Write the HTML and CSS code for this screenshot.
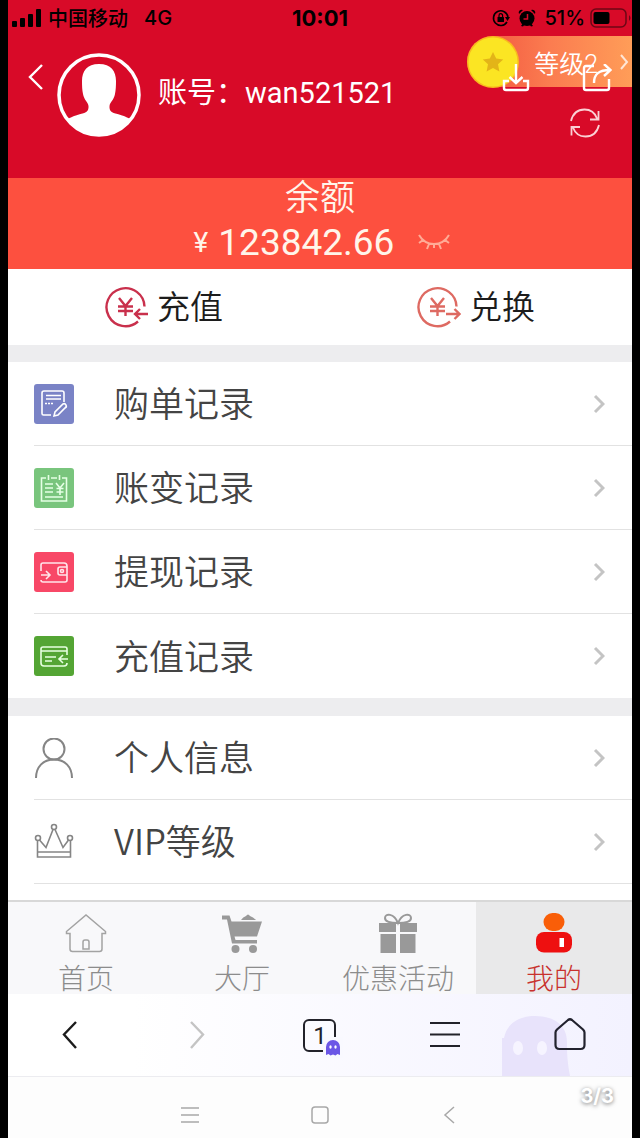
FILE: index.html
```html
<!DOCTYPE html>
<html lang="zh-CN">
<head>
    <meta charset="UTF-8">
    <meta name="viewport" content="width=device-width, initial-scale=1.0">
    <title>我的</title>
    <link rel="stylesheet" href="styles.css">
</head>
<body>
    <header class="header">
        <div class="status-bar">
            <div class="status-left">
                <svg width="30" height="18" viewBox="0 0 30 18"><rect x="0" y="12" width="5" height="6" rx="1"/><rect x="8" y="9" width="5" height="9" rx="1"/><rect x="16" y="5" width="5" height="13" rx="1"/><rect x="24" y="0" width="5" height="18" rx="1"/></svg>
                <span class="carrier">中国移动</span>
                <span class="network">4G</span>
            </div>
            <div class="clock">10:01</div>
            <div class="status-right">
                <svg width="18" height="18" viewBox="0 0 18 18"><path d="M15 13A7.3 7.3 0 1 1 16 8" fill="none" stroke="#000" stroke-width="1.6"/><path d="M13 8h5l-2.5 4z"/><rect x="5.5" y="8" width="6.500" height="5" rx=".6"/><path d="M7 8V6.500a1.800 1.800 0 0 1 3.600 0V8" fill="none" stroke="#000" stroke-width="1.200"/></svg>
                <svg width="18" height="18" viewBox="0 0 18 18"><circle cx="9" cy="9.500" r="7.500"/><path d="M1 5a3 3 0 0 1 4-4zM17 5a3 3 0 0 0-4-4zM3 17l2-3 2 1-2 2.500zM15 17l-2-3-2 1 2 2.500z"/><path d="M9.500 5v5H5.500" fill="none" stroke="#d80a28" stroke-width="1.500"/></svg>
                <span class="percent">51%</span>
                <svg width="42" height="20" viewBox="0 0 42 20"><rect x="1" y="1" width="35" height="18" rx="5" fill="none" stroke="#6d0715" stroke-width="1.500"/><rect x="3.500" y="4" width="16" height="12" rx="2"/><path d="M39 7q3 3 0 6z" fill="#6d0715"/></svg>
            </div>
        </div>
        <div class="profile">
            <button class="icon-btn" aria-label="返回">
                <svg width="16" height="28" viewBox="0 0 16 28"><path d="M14 2L2 14l12 12" fill="none" stroke="#fff" stroke-width="2.400"/></svg>
            </button>
            <svg class="avatar" width="84" height="84" viewBox="0 0 84 84"><circle cx="42" cy="42" r="40" fill="none" stroke="#fff" stroke-width="3.500"/><path d="M42 11c12 0 17 7 17 17 0 5-.2 9-1 13-1 6-5 8-5.500 12-.3 5 2 7 8 8 7 2 10 3.500 13.500 5.500C66 77 55 83 42 83S18 77 10 66.500c3.500-2 6.500-3.500 13.500-5.500 6-1 8.300-3 8-8-.5-4-4.500-6-5.500-12-.8-4-1-8-1-13 0-10 5-17 17-17z" fill="#fff"/></svg>
            <div class="account">账号：wan521521</div>
            <button class="icon-btn refresh" aria-label="刷新">
                <svg width="30" height="30" viewBox="0 0 30 30" fill="none" stroke="#fbd0d4" stroke-width="1.800"><path d="M1 13C3 5 8 1.500 14.500 1.500c6 0 10.500 3.500 12.500 9M28.500 3v8.500H20M29 17c-2 8-7 11.500-13.500 11.500-6 0-10.500-3.500-12.500-9M1.500 27.500V19H10"/></svg>
            </button>
        </div>
        <a class="level" href="#">
            <svg width="52" height="52" viewBox="0 0 52 52"><circle cx="26" cy="26" r="26" fill="#f9ba1e"/><circle cx="26" cy="26" r="24.500" fill="#fbe523"/><path d="M26 16l3.200 6.600 7 .8-5.200 4.900 1.400 7.200L26 32l-6.400 3.500 1.400-7.200-5.200-4.900 7-.8z" fill="#e3b418"/></svg>
            <span>等级2</span>
            <svg width="10" height="16" viewBox="0 0 10 16"><path d="M2 1l6 7-6 7" fill="none" stroke="#ffe6d5" stroke-width="2"/></svg>
        </a>
        <div class="tools">
            <button class="icon-btn" aria-label="下载">
                <svg width="28" height="28" viewBox="0 0 28 28" fill="none" stroke="#fff" stroke-width="2.400"><path d="M7 17H2v7q0 2 2 2h20q2 0 2-2v-7h-5M14 0v19M7.500 13l6.500 6 6.500-6"/></svg>
            </button>
            <button class="icon-btn" aria-label="分享">
                <svg width="30" height="28" viewBox="0 0 30 28" fill="none" stroke="#fff" stroke-width="2.400"><path d="M12 2H4Q2 2 2 4v20q0 2 2 2h21q2 0 2-2v-9M12 19C12 10 17 6 28 6M22 0l6.500 6-6.500 6"/></svg>
            </button>
        </div>
    </header>

    <section class="balance">
        <div class="balance-title">余额</div>
        <div class="balance-row">
            <span class="yen">¥</span>
            <span class="amount">123842.66</span>
            <button class="icon-btn eye" aria-label="隐藏余额">
                <svg width="32" height="16" viewBox="0 0 32 16" fill="none" stroke="#ffab96" stroke-width="2"><path d="M1 1c7 12 23 12 30 0M5 6l-4 3M11 10l-2 5M21 10l2 5M27 6l4 3M16 10v4"/></svg>
            </button>
        </div>
    </section>

    <section class="actions">
        <button class="action">
            <svg width="44" height="42" viewBox="0 0 44 42" fill="none" stroke="#c9304c" stroke-width="2.400"><path d="M39.500 20.500A19 19 0 1 0 33 35.500M43 28H30M35 23l-5 5 5 5"/><path d="M14 12l6.500 8 6.500-8M20.500 20v10M13 20.500h15M13 25h15"/></svg>
            <span>充值</span>
        </button>
        <button class="action">
            <svg width="44" height="42" viewBox="0 0 44 42" fill="none" stroke="#de6a62" stroke-width="2.400"><path d="M39.500 20.500A19 19 0 1 0 33 35.500M29 28H42M37.500 23l5 5-5 5"/><path d="M14 12l6.500 8 6.500-8M20.500 20v10M13 20.500h15M13 25h15"/></svg>
            <span>兑换</span>
        </button>
    </section>

    <nav class="menu">
        <a class="menu-item" href="#">
            <svg class="menu-icon" width="40" height="40" viewBox="0 0 40 40" fill="none" stroke="#fff" stroke-width="1.600"><rect width="40" height="40" rx="3" fill="#7a83c6" stroke="none"/><path d="M17 31H9.500Q8 31 8 29.500V9q0-2 2-2h18q2 0 2 2v9M12 11.500h15M12 15h15"/><path d="M11 19.500h8" stroke-dasharray="2 1"/><path d="M20 32l1-4 8-8q2-1 3 1t-1 3l-7 7z"/></svg>
            <span class="menu-text">购单记录</span>
            <svg class="arrow" width="12" height="20" viewBox="0 0 12 20"><path d="M2 2l8 8-8 8"/></svg>
        </a>
        <a class="menu-item" href="#">
            <svg class="menu-icon" width="40" height="40" viewBox="0 0 40 40" fill="none" stroke="#e5ffe5" stroke-width="1.600"><rect width="40" height="40" rx="3" fill="#79c57d" stroke="none"/><path d="M12 10H7.500v23h25V10H28M17 10h6M14.500 7v5M25.500 7v5M11 16h8M11 20h8M11 24h8M11 29h18M22 15l4 5 4-5M26 20v7M22.500 20.500h7M22.500 24h7"/></svg>
            <span class="menu-text">账变记录</span>
            <svg class="arrow" width="12" height="20" viewBox="0 0 12 20"><path d="M2 2l8 8-8 8"/></svg>
        </a>
        <a class="menu-item" href="#">
            <svg class="menu-icon" width="40" height="40" viewBox="0 0 40 40" fill="none" stroke="#ffe5ea" stroke-width="1.600"><rect width="40" height="40" rx="3" fill="#f84867" stroke="none"/><path d="M7 19v-6q0-2 2-2h21q3 0 3 3v14q0 2-2 2H9q-2 0-2-2M7 23h9M12 19l4 4-4 4M33 15h-7q-2 0-2 2v4q0 2 2 2h7"/><circle cx="28" cy="19" r="1.500"/></svg>
            <span class="menu-text">提现记录</span>
            <svg class="arrow" width="12" height="20" viewBox="0 0 12 20"><path d="M2 2l8 8-8 8"/></svg>
        </a>
        <a class="menu-item" href="#">
            <svg class="menu-icon" width="40" height="40" viewBox="0 0 40 40" fill="none" stroke="#e6ffe0" stroke-width="1.600"><rect width="40" height="40" rx="3" fill="#54a534" stroke="none"/><path d="M33 19v-6q0-2-2-2H9q-2 0-2 2v14q0 3 3 3h20q3 0 3-3M7 15h26M11 21h11M11 25h7M34 23h-9M29 19l-4 4 4 4"/></svg>
            <span class="menu-text">充值记录</span>
            <svg class="arrow" width="12" height="20" viewBox="0 0 12 20"><path d="M2 2l8 8-8 8"/></svg>
        </a>
    </nav>

    <nav class="menu menu-last">
        <a class="menu-item" href="#">
            <svg class="menu-icon" width="40" height="40" viewBox="0 0 40 40" fill="none" stroke="#858585" stroke-width="2"><circle cx="20" cy="11" r="10.500"/><path d="M2 40c0-11 7-18.500 18-18.500S38 29 38 40"/></svg>
            <span class="menu-text">个人信息</span>
            <svg class="arrow" width="12" height="20" viewBox="0 0 12 20"><path d="M2 2l8 8-8 8"/></svg>
        </a>
        <a class="menu-item" href="#">
            <svg class="menu-icon" width="40" height="40" viewBox="0 0 40 40" fill="none" stroke="#858585" stroke-width="1.600"><circle cx="20" cy="5" r="2.500"/><circle cx="4" cy="16" r="2.500"/><circle cx="36" cy="16" r="2.500"/><path d="M3.500 18.500V35h33V18.500M3.500 30h33M5.500 18l6.500 7.500L19 7.500M21 7.500l8 18 5.500-7.500"/></svg>
            <span class="menu-text">VIP等级</span>
            <svg class="arrow" width="12" height="20" viewBox="0 0 12 20"><path d="M2 2l8 8-8 8"/></svg>
        </a>
    </nav>

    <nav class="tabs">
        <a class="tab" href="#">
            <svg width="42" height="42" viewBox="0 0 42 42" fill="none" stroke="#a3a3a3" stroke-width="1.500"><path d="M5 21.500H1.500v-2L21 3l19.500 16.500v2H37V37q0 2.500-2.500 2.500h-27Q5 39.500 5 37zM18 37v-7q0-2 2-2h2q2 0 2 2v7z"/></svg>
            <span>首页</span>
        </a>
        <a class="tab" href="#">
            <svg width="42" height="42" viewBox="0 0 42 42" fill="#999"><path d="M1 3.500h7.500l2 6H41l-5 15H13.500l1 3.500H36v3.500H11L6 7.500H1z"/><path d="M20 8q2-3 5-4 2-3 4 0 3 1 6 4z"/><circle cx="14.500" cy="37" r="4"/><circle cx="32" cy="37" r="4"/></svg>
            <span>大厅</span>
        </a>
        <a class="tab" href="#">
            <svg width="42" height="42" viewBox="0 0 42 42" fill="#999"><path d="M2 11h17v9H2zM23 11h17v9H23zM3.500 22H19v19H3.500zM23 22h15.500v19H23z"/><path d="M21 11C17 1 8 1 8 6c0 4 6 5 13 5 7 0 13-1 13-5 0-5-9-5-13 5z" fill="none" stroke="#999" stroke-width="2"/></svg>
            <span>优惠活动</span>
        </a>
        <a class="tab active" href="#">
            <svg width="42" height="42" viewBox="0 0 42 42"><rect x="10.500" y="1" width="21" height="18" rx="9" fill="#f95e08"/><rect x="3" y="20" width="36" height="20.500" rx="8" fill="#ee1010"/><rect x="26.500" y="26" width="4.500" height="9" fill="#fff"/></svg>
            <span>我的</span>
        </a>
    </nav>

    <nav class="browser-bar">
        <button class="icon-btn" aria-label="后退">
            <svg width="32" height="34" viewBox="0 0 32 34"><path d="M22 4L10 16.500 22 30" fill="none" stroke="#1c1c1c" stroke-width="2.400"/></svg>
        </button>
        <button class="icon-btn" aria-label="前进">
            <svg width="32" height="34" viewBox="0 0 32 34"><path d="M12 4l12 12.500L12 30" fill="none" stroke="#c4c4c4" stroke-width="2.400"/></svg>
        </button>
        <button class="icon-btn pages" aria-label="窗口">
            <span class="pages-box">1</span>
            <svg class="pages-ghost" width="16" height="17" viewBox="0 0 16 17"><path d="M1 16V8a7 7 0 0 1 14 0v8l-2.500-1-2 1.500L8 15.500 5.500 16.500 3.500 15z" fill="#6b57e6"/><ellipse cx="5.500" cy="8" rx="1.200" ry="1.700" fill="#fff"/><ellipse cx="10.500" cy="8" rx="1.200" ry="1.700" fill="#fff"/></svg>
        </button>
        <button class="icon-btn" aria-label="菜单">
            <svg width="32" height="34" viewBox="0 0 32 34"><path d="M1 5h30M1 16.500h30M1 28h30" fill="none" stroke="#22222a" stroke-width="2.200"/></svg>
        </button>
        <button class="icon-btn home" aria-label="主页">
            <svg class="home-ghost" width="70" height="60" viewBox="0 0 70 60"><path d="M0 60V22h2C5 7 17 0 33 0c19 0 32 9 32 26 0 9 0 18 3 34z" fill="#e8e3fb"/><ellipse cx="16" cy="32" rx="5" ry="7" fill="#f6f4ff"/><ellipse cx="40" cy="32" rx="5" ry="7" fill="#f6f4ff"/></svg>
            <svg width="32" height="34" viewBox="0 0 32 34"><path d="M3 11.500L14 2q2-1.500 4 0l11 9.500q1.500 1.500 1.500 3V27q0 4-4 4h-21q-4 0-4-4V14.500q0-1.500 1.500-3z" fill="none" stroke="#22222e" stroke-width="2.200"/></svg>
        </button>
    </nav>

    <footer class="system-bar">
        <button class="icon-btn" aria-label="最近任务">
            <svg width="18" height="18" viewBox="0 0 18 18"><path d="M0 2h18M0 9h18M0 16h18"/></svg>
        </button>
        <button class="icon-btn" aria-label="桌面">
            <svg width="18" height="18" viewBox="0 0 18 18"><rect x="1" y="1" width="16" height="16" rx="3"/></svg>
        </button>
        <button class="icon-btn" aria-label="系统返回">
            <svg width="18" height="18" viewBox="0 0 18 18"><path d="M13 1L4 9l9 8"/></svg>
        </button>
        <span class="counter">3/3</span>
    </footer>
</body>
</html>
```

FILE: styles.css
```css
* {
    box-sizing: border-box;
}
body {
    margin: 0;
    padding: 0 8px;
    background: #000;
    color: #444;
    font-family: Roboto, "Noto Sans CJK SC", sans-serif;
}
a {
    color: inherit;
    text-decoration: none;
}
button {
    font-family: inherit;
    color: inherit;
    border: none;
    background: none;
    padding: 0;
    cursor: pointer;
}
svg {
    display: block;
    flex-shrink: 0;
}
.icon-btn {
    display: flex;
    align-items: center;
    justify-content: center;
}

/* header */
.header {
    position: relative;
    background: #d80a28;
    color: #fff;
    padding-bottom: 40px;
}
.status-bar {
    display: grid;
    grid-template-columns: 1fr auto 1fr;
    align-items: center;
    height: 36px;
    color: #000;
    font-family: Inter, "Noto Sans CJK SC", sans-serif;
}
.status-left, .status-right {
    display: flex;
    align-items: center;
}
.status-left {
    padding-left: 4px;
}
.status-right {
    justify-content: flex-end;
    gap: 8px;
}
.carrier {
    margin-left: 6px;
    padding-bottom: 2px;
    font-size: 20px;
    font-weight: 500;
}
.network {
    margin-left: 16px;
    font-size: 20px;
    font-weight: 500;
}
.clock {
    font-size: 22px;
    font-weight: 700;
}
.percent {
    font-size: 20px;
    font-weight: 500;
}
.status-right svg:last-child {
    margin-left: -3px;
}
.profile {
    display: flex;
    align-items: center;
    padding: 16px 32px 0 20px;
}
.profile > .icon-btn:first-child {
    margin-bottom: 36px;
}
.avatar {
    margin-left: 13px;
}
.account {
    flex: 1;
    margin-left: 17px;
    padding-bottom: 4px;
    font-family: Roboto, "Noto Sans CJK SC", sans-serif;
    font-size: 29px;
    line-height: 42px;
}
.refresh {
    margin-top: 56px;
}
.level {
    position: absolute;
    top: 36px;
    right: 0;
    display: flex;
    align-items: center;
    height: 51px;
    padding-right: 3px;
    border-radius: 26px 0 0 26px;
    background: linear-gradient(to right, #f0503c, #fb7c50 50%, #ff9d58);
    font-size: 25px;
}
.level span {
    margin: 0 21px 0 15px;
    font-weight: 350;
}
.tools {
    position: absolute;
    top: 64px;
    right: 20px;
    display: flex;
    gap: 52px;
}

/* balance */
.balance {
    background: #fd503f;
    color: #fff5ea;
    text-align: center;
    padding-bottom: 5px;
}
.balance-title {
    font-size: 35px;
    font-weight: 350;
    line-height: 42px;
}
.balance-row {
    display: flex;
    align-items: center;
    justify-content: center;
    height: 44px;
    padding-left: 4px;
}
.yen {
    margin-right: 10px;
    font-size: 28px;
}
.amount {
    font-size: 37px;
}
.eye {
    margin-left: 24px;
}

/* recharge / exchange */
.actions {
    display: grid;
    grid-template-columns: 1fr 1fr;
    height: 76px;
    background: #fff;
}
.action {
    display: flex;
    align-items: center;
    justify-content: center;
    gap: 8px;
    color: #1c1c1c;
    font-size: 33px;
    font-weight: 350;
}
.action span {
    padding-bottom: 4px;
}

/* menu */
.menu {
    border-top: 17px solid #ededef;
    padding-left: 26px;
    background: #fff;
}
.menu-item {
    display: flex;
    align-items: center;
    height: 84px;
    border-bottom: 1px solid #e2e2e2;
}
.menu:not(.menu-last) .menu-item:last-child {
    border-bottom: none;
}
.menu-last {
    border-top-width: 18px;
    padding-bottom: 16px;
}
.menu-text {
    flex: 1;
    margin-left: 40px;
    padding-bottom: 4px;
    font-family: "Noto Sans CJK SC", sans-serif;
    font-size: 35px;
    font-weight: 350;
}
.arrow {
    margin-right: 27px;
    fill: none;
    stroke: #c4c4c4;
    stroke-width: 3;
}

/* tabs */
.tabs {
    display: grid;
    grid-template-columns: repeat(4, 1fr);
    border-top: 2px solid #d8d8d8;
    background: #f8f8fa;
}
.tab {
    display: flex;
    flex-direction: column;
    align-items: center;
    gap: 12px;
    padding-top: 10px;
    color: #8c8c8c;
    font-size: 28px;
    font-weight: 300;
    line-height: 28px;
}
.tab.active {
    background: #e9e9ea;
    color: #c8312d;
}

/* browser bar */
.browser-bar {
    display: grid;
    grid-template-columns: repeat(5, 1fr);
    height: 83px;
    border-bottom: 1px solid #ececf0;
    background: linear-gradient(to right, #fff 20%, #f3f2ff);
}
.pages, .home {
    position: relative;
}
.pages-box {
    width: 33px;
    height: 33px;
    border: 2px solid #22222a;
    border-radius: 6px;
    color: #22222a;
    font-size: 24px;
    line-height: 30px;
}
.pages-ghost {
    position: absolute;
    left: calc(50% + 5px);
    top: calc(50% + 4px);
    box-shadow: 0 0 0 2px #f9f9ff;
    background: #f9f9ff;
}
.home-ghost {
    position: absolute;
    right: 60px;
    bottom: 0;
}
.home svg:last-child {
    position: relative;
}

/* system bar */
.system-bar {
    position: relative;
    display: flex;
    align-items: center;
    justify-content: center;
    gap: 112px;
    height: 63px;
    padding-top: 12px;
    background: #fdfdfd;
}
.system-bar svg {
    fill: none;
    stroke: #a8a8a8;
    stroke-width: 1.5;
}
.counter {
    position: absolute;
    top: 7px;
    right: 18px;
    color: #fff;
    font-family: Inter, sans-serif;
    font-size: 20px;
    font-weight: 700;
    text-shadow: 0 1px 4px #777;
}
```
